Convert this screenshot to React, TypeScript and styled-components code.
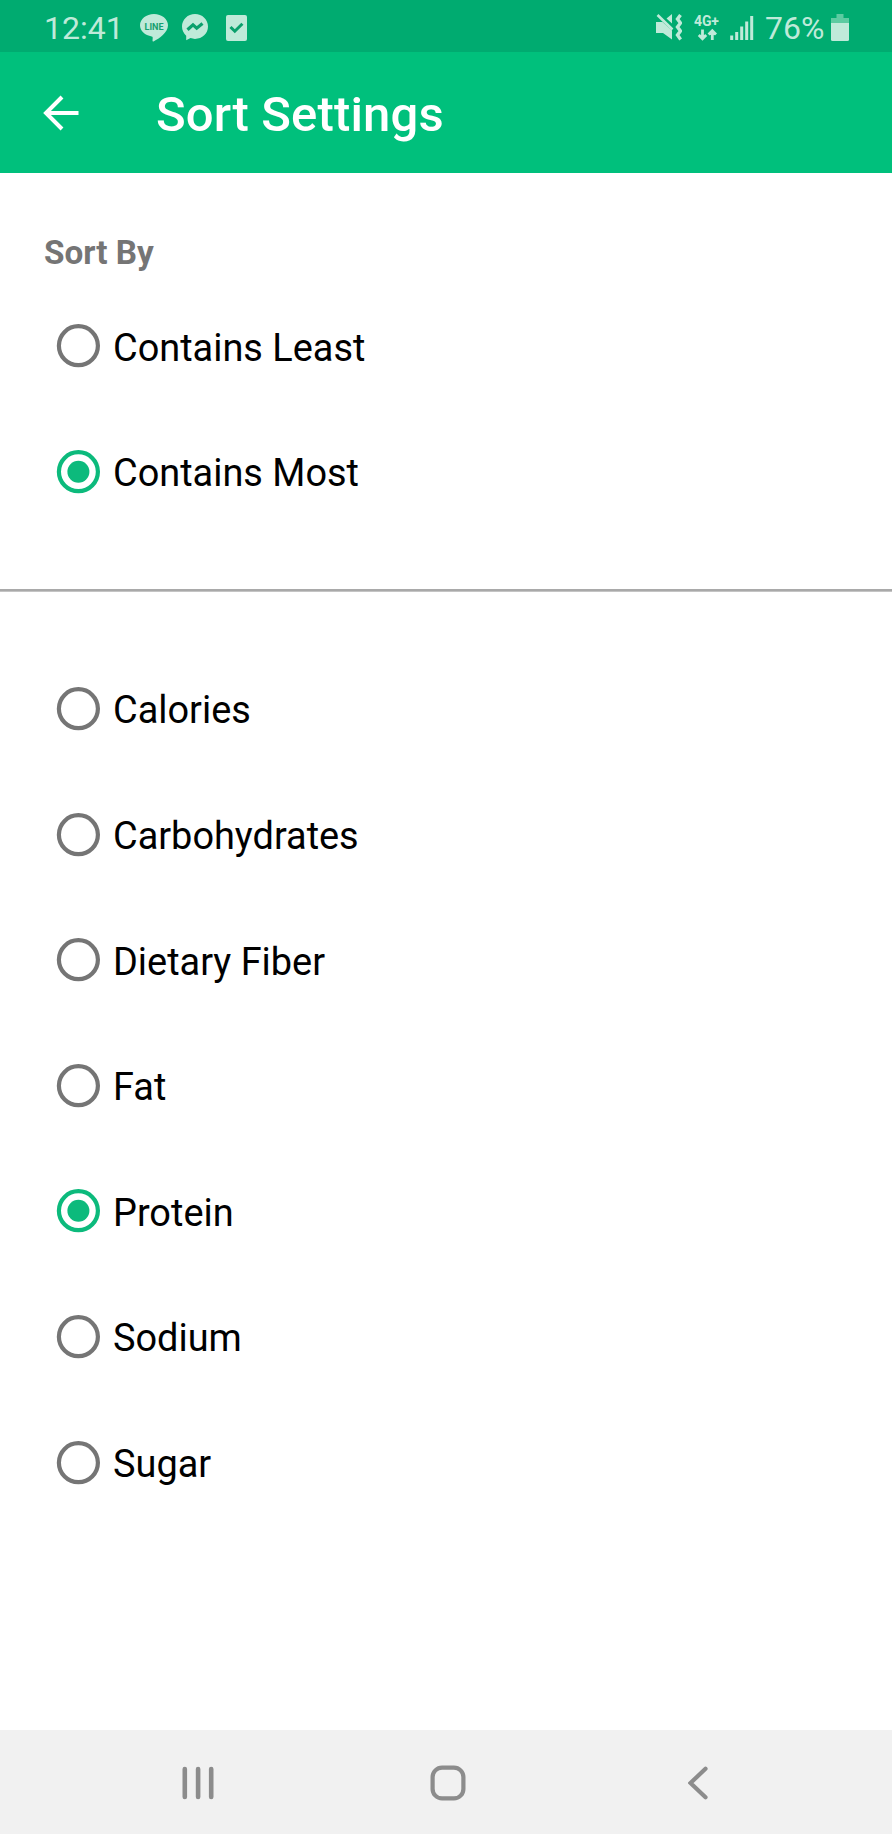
import React, { useState } from "react";
import styled, { createGlobalStyle } from "styled-components";

const GlobalStyle = createGlobalStyle`
  * { box-sizing: border-box; }
  body { margin: 0; background: #fff; font-family: Roboto, "Liberation Sans", sans-serif; }
`;

const Screen = styled.div`
  width: 892px;
  height: 1834px;
  display: flex;
  flex-direction: column;
  background: #fff;
`;

const StatusBar = styled.header`
  height: 52px;
  flex: none;
  display: flex;
  align-items: center;
  justify-content: space-between;
  padding: 3px 43px 0 44px;
  background: #00ab70;
  color: #bfead9;
`;

const StatusGroup = styled.div`
  display: flex;
  align-items: center;
`;

const StatusText = styled.span<{ $width: number }>`
  width: ${(p) => p.$width}px;
  padding-top: 1px;
  font-size: 32px;
  line-height: 40px;
  white-space: nowrap;
`;

const StatusIcon = styled.svg<{ $gap?: number }>`
  display: block;
  flex: none;
  margin-right: ${(p) => p.$gap ?? 0}px;
`;

const AppBar = styled.div`
  height: 121px;
  flex: none;
  display: flex;
  align-items: center;
  padding: 1px 43px 0 43px;
  background: #00c07c;
  color: #fff;
`;

const BackButton = styled.button`
  width: 113px;
  height: 48px;
  padding: 0;
  border: 0;
  background: none;
  color: inherit;
  display: flex;
  align-items: center;
`;

const Title = styled.h1`
  margin: 0;
  padding-top: 4px;
  font-size: 49px;
  font-weight: 500;
  line-height: 60px;
  letter-spacing: 0.15px;
  white-space: nowrap;
`;

const Content = styled.main`
  flex: 1;
  display: flex;
  flex-direction: column;
`;

const SectionLabel = styled.h2`
  margin: 60px 0 0 44px;
  font-size: 33.3px;
  font-weight: 700;
  line-height: 40px;
  height: 40px;
  color: #757575;
`;

const OptionGroup = styled.div<{ $top: number }>`
  margin-top: ${(p) => p.$top}px;
  display: flex;
  flex-direction: column;
`;

const Option = styled.button`
  height: 125.6px;
  padding: 0 0 0 56px;
  border: 0;
  background: none;
  display: flex;
  align-items: center;
  gap: 13px;
  font: inherit;
  color: #000;
  text-align: left;
`;

const RadioMark = styled.svg<{ $on: boolean }>`
  display: block;
  flex: none;
  color: ${(p) => (p.$on ? "#0cba7c" : "#757575")};
`;

const OptionLabel = styled.span`
  font-size: 37.9px;
  line-height: 44px;
  padding-top: 3px;
`;

const Divider = styled.hr`
  width: 100%;
  height: 3px;
  flex: none;
  margin: 54px 0 0;
  border: 0;
  background: linear-gradient(#a9a9a9 0 2px, #c4c4c4 2px 3px);
`;

const NavBar = styled.nav`
  height: 104px;
  flex: none;
  display: flex;
  align-items: center;
  justify-content: space-between;
  padding: 1px 180px 0 180px;
  background: #f1f1f1;
  color: #8c8c8c;
`;

const NavButton = styled.button<{ $width: number }>`
  width: ${(p) => p.$width}px;
  padding: 0;
  border: 0;
  background: none;
  color: inherit;
  display: flex;
`;

type RadioListProps = {
  options: string[];
  value: string;
  top: number;
  onChange: (v: string) => void;
};

function RadioList({ options, value, top, onChange }: RadioListProps) {
  return (
    <OptionGroup role="radiogroup" $top={top}>
      {options.map((o) => (
        <Option key={o} role="radio" aria-checked={o === value} onClick={() => onChange(o)}>
          <RadioMark $on={o === value} width="44" height="44" viewBox="0 0 44 44">
            <circle cx="22.400" cy="21.700" r="19.500" fill="none" stroke="currentColor" strokeWidth="4.200" />
            {o === value && <circle cx="22.400" cy="21.700" r="11" fill="currentColor" />}
          </RadioMark>
          <OptionLabel>{o}</OptionLabel>
        </Option>
      ))}
    </OptionGroup>
  );
}

const LineIcon = () => (
  <StatusIcon $gap={14} width="28" height="28" viewBox="0 0 28 28">
    <path fill="currentColor" d="M14 0C6.2 0 0 5 0 11.3c0 5.600 5 10.300 11.700 11.100 1.300.3 1.100 1.100.8 4.100 0 .9.300 1.300 1.400.8C19 24.600 28 18.700 28 11.300 28 5 21.800 0 14 0z" />
    <text x="4.500" y="15.600" textLength="19" lengthAdjust="spacingAndGlyphs" fontFamily="Roboto, sans-serif" fontWeight="700" fontSize="9.500" fill="#149f6f">LINE</text>
  </StatusIcon>
);

const MessengerIcon = () => (
  <StatusIcon $gap={18} width="26" height="27" viewBox="0 0 26 27">
    <path fill="currentColor" d="M13 0C5.800 0 0 5.500 0 12.600c0 3.800 1.600 6.800 4.200 9.100v4.600l4.300-2.200c1.400.5 3 .8 4.500.8 7.200 0 13-5.200 13-12.300S20.200 0 13 0z" />
    <path d="M5.500 15.800l5.500-4.900 3.700 3.300 5.800-4.600" fill="none" stroke="#0aa06c" strokeWidth="3.200" />
  </StatusIcon>
);

const TaskIcon = () => (
  <StatusIcon width="21" height="26" viewBox="0 0 21 26">
    <rect width="21" height="26" rx="2" fill="currentColor" />
    <path d="M4.500 12l4.300 4.200 7.600-7.400" fill="none" stroke="#0aa06c" strokeWidth="3" />
  </StatusIcon>
);

const VibrateIcon = () => (
  <StatusIcon $gap={12} width="26" height="27" viewBox="0 0 26 27">
    <path fill="currentColor" d="M0 8h6.500L16 16.500V25.500L7 19H0zM10.500 4.500L16 0v9.500z" />
    <path d="M1.500 1l15 14.500" stroke="currentColor" strokeWidth="2.600" />
    <path d="M24.500 1l-3 4 3 4-3 4 3 4-3 4 3.200 4.500" fill="none" stroke="currentColor" strokeWidth="3.400" />
  </StatusIcon>
);

const NetworkIcon = () => (
  <StatusIcon $gap={11} width="25" height="27" viewBox="0 0 25 27">
    <text x="0" y="12" textLength="25" fontFamily="Roboto, sans-serif" fontWeight="700" fontSize="14" fill="currentColor">4G+</text>
    <path d="M8.500 15.500v9M4.800 21l3.700 3.800 3.700-3.800M18.300 26v-9M14.600 20.500l3.700-3.800 3.700 3.800" fill="none" stroke="currentColor" strokeWidth="2.800" />
  </StatusIcon>
);

const SignalIcon = () => (
  <StatusIcon $gap={11} width="24" height="26" viewBox="0 0 24 26">
    <path d="M1.700 20.500v4.500M6.700 17v8M11.700 11.500V25M16.700 6.500V25M21.700 1v24" stroke="currentColor" strokeWidth="3" />
  </StatusIcon>
);

const BatteryIcon = () => (
  <StatusIcon width="18" height="28" viewBox="0 0 18 28">
    <path d="M5.500 0h7v4H18v6H0V4h5.500z" fill="#5ccba1" />
    <path d="M0 9h18v16.500a1.500 1.500 0 01-1.500 1.500h-15A1.500 1.500 0 010 25.500z" fill="currentColor" />
  </StatusIcon>
);

export default function App() {
  const [order, setOrder] = useState("Contains Most");
  const [nutrient, setNutrient] = useState("Protein");
  return (
    <>
      <GlobalStyle />
      <Screen>
        <StatusBar>
          <StatusGroup>
            <StatusText $width={96}>12:41</StatusText>
            <LineIcon />
            <MessengerIcon />
            <TaskIcon />
          </StatusGroup>
          <StatusGroup>
            <VibrateIcon />
            <NetworkIcon />
            <SignalIcon />
            <StatusText $width={66}>76%</StatusText>
            <BatteryIcon />
          </StatusGroup>
        </StatusBar>
        <AppBar>
          <BackButton aria-label="Back">
            <svg width="37" height="36" viewBox="0 0 37 36" fill="none" stroke="currentColor" strokeWidth="4">
              <path d="M35.500 18H3M19 2L3 18l16 16" />
            </svg>
          </BackButton>
          <Title>Sort Settings</Title>
        </AppBar>
        <Content>
          <SectionLabel>Sort By</SectionLabel>
          <RadioList top={10.5} options={["Contains Least", "Contains Most"]} value={order} onChange={setOrder} />
          <Divider />
          <RadioList
            top={54.5}
            options={["Calories", "Carbohydrates", "Dietary Fiber", "Fat", "Protein", "Sodium", "Sugar"]}
            value={nutrient}
            onChange={setNutrient}
          />
        </Content>
        <NavBar>
          <NavButton aria-label="Recent apps" $width={36}>
            <svg width="36" height="36" viewBox="0 0 36 36" stroke="currentColor" strokeWidth="4.600" strokeLinecap="round">
              <path d="M4.800 4v28M18.100 4v28M31.200 4v28" />
            </svg>
          </NavButton>
          <NavButton aria-label="Home" $width={45}>
            <svg width="36" height="36" viewBox="0 0 36 36" fill="none" stroke="currentColor" strokeWidth="4.200">
              <rect x="2.600" y="2.600" width="30.800" height="30.800" rx="9.500" />
            </svg>
          </NavButton>
          <NavButton aria-label="Back" $width={24}>
            <svg width="24" height="36" viewBox="0 0 24 36" fill="none" stroke="currentColor" strokeWidth="4.200" strokeLinecap="round">
              <path d="M17.500 3.800L2.500 18l15 14.200" />
            </svg>
          </NavButton>
        </NavBar>
      </Screen>
    </>
  );
}
